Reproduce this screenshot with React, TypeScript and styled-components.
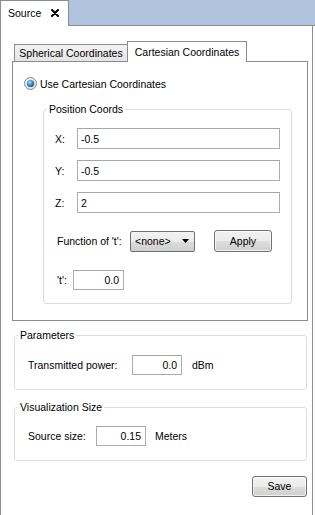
import React from 'react'
import styled, { createGlobalStyle } from 'styled-components'

const GlobalStyle = createGlobalStyle`
  html, body {
    margin: 0;
    padding: 0;
    background: #fff;
  }
  body {
    font-family: "Liberation Sans", Arial, sans-serif;
    font-size: 10.5px;
    color: #000;
  }
  #root {
    width: 315px;
    height: 515px;
    overflow: hidden;
  }
`

const Window = styled.div`
  display: flex;
  flex-direction: column;
  width: 315px;
  height: 515px;
`

const DockBar = styled.div`
  display: flex;
  height: 26px;
  box-sizing: border-box;
  background: #b0c4de;
  border-bottom: 1px solid #898c95;
`

const DockTab = styled.div`
  display: flex;
  align-items: center;
  gap: 10px;
  width: 69px;
  height: 26px;
  margin-bottom: -1px;
  box-sizing: border-box;
  padding: 0 0 1px 7px;
  background: #fff;
  border: 1px solid #898c95;
  border-bottom: none;
`

const Panel = styled.div`
  flex: 1;
  display: flex;
  flex-direction: column;
  width: 313px;
  box-sizing: border-box;
  padding: 15px 4px 0 11px;
  border-left: 1px solid #898c95;
  border-right: 1px solid #898c95;
`

const TabWidget = styled.div`
  display: flex;
  flex-direction: column;
`

const TabBar = styled.div`
  display: flex;
  align-items: flex-end;
  height: 20px;
  padding-left: 2px;
`

const Tab = styled.div<{ $active?: boolean; $width: number }>`
  position: relative;
  z-index: ${(p) => (p.$active ? 1 : 0)};
  display: flex;
  align-items: center;
  justify-content: center;
  width: ${(p) => p.$width}px;
  height: ${(p) => (p.$active ? 21 : 17)}px;
  margin-left: ${(p) => (p.$active ? -1 : 0)}px;
  margin-bottom: ${(p) => (p.$active ? -1 : 0)}px;
  box-sizing: border-box;
  padding-bottom: 1px;
  border: 1px solid #898c95;
  border-bottom: none;
  background: ${(p) =>
    p.$active ? '#fff' : 'linear-gradient(#f3f3f3, #e4e4e4)'};
  white-space: nowrap;
`

const TabPane = styled.div`
  display: flex;
  flex-direction: column;
  padding: 15px 14px 16px 11px;
  border: 1px solid #898c95;
  background: #fff;
`

const RadioRow = styled.label`
  display: flex;
  align-items: center;
  gap: 3px;
  height: 13px;
  white-space: nowrap;
`

const GroupBox = styled.fieldset<{ $indent?: number; $top?: number }>`
  margin: ${(p) => p.$top ?? 0}px 1px 0 ${(p) => p.$indent ?? 0}px;
  padding: 0;
  min-width: 0;
  border: 1px solid #d5dfe5;
  border-radius: 3px;
`

const GroupTitle = styled.legend`
  margin-left: 3px;
  padding: 0 2px;
  line-height: 13px;
  white-space: nowrap;
`

const GroupBody = styled.div<{ $pad: string; $gap?: number }>`
  display: flex;
  flex-direction: column;
  gap: ${(p) => p.$gap ?? 0}px;
  padding: ${(p) => p.$pad};
`

const FieldRow = styled.div<{ $shift?: number; $top?: number }>`
  display: flex;
  align-items: center;
  margin-left: ${(p) => p.$shift ?? 0}px;
  margin-top: ${(p) => p.$top ?? 0}px;
`

const FieldLabel = styled.span<{ $width: number }>`
  flex: none;
  width: ${(p) => p.$width}px;
  white-space: nowrap;
`

const LineEdit = styled.div<{ $width?: number; $height?: number; $right?: boolean }>`
  display: flex;
  align-items: center;
  justify-content: ${(p) => (p.$right ? 'flex-end' : 'flex-start')};
  flex: ${(p) => (p.$width ? 'none' : '1')};
  width: ${(p) => (p.$width ? `${p.$width}px` : 'auto')};
  height: ${(p) => p.$height ?? 20}px;
  box-sizing: border-box;
  padding: 0 4px 0 3px;
  border: 1px solid #abadb3;
  border-top-color: #a3a6ad;
  background: #fff;
`

const Unit = styled.span<{ $gap: number }>`
  margin-left: ${(p) => p.$gap}px;
`

const ComboBox = styled.div`
  display: flex;
  align-items: center;
  justify-content: space-between;
  width: 65px;
  height: 21px;
  box-sizing: border-box;
  padding: 0 5px 0 4px;
  border: 1px solid #707070;
  border-radius: 2px;
  background: linear-gradient(#f2f2f2 0%, #ebebeb 50%, #dddddd 51%, #cfcfcf 100%);
`

const PushButton = styled.button<{ $width: number; $height: number; $left?: number }>`
  width: ${(p) => p.$width}px;
  height: ${(p) => p.$height}px;
  margin: 0 0 0 ${(p) => p.$left ?? 0}px;
  padding: 0 0 1px;
  box-sizing: border-box;
  font: inherit;
  color: #000;
  border: 1px solid #707070;
  border-radius: 3px;
  background: linear-gradient(#f2f2f2 0%, #ebebeb 50%, #dddddd 51%, #cfcfcf 100%);
  box-shadow: inset 0 0 0 1px rgba(255, 255, 255, 0.7);
`

const Footer = styled.div`
  display: flex;
  justify-content: flex-end;
  margin: 15px 1px 0 0;
`

const CloseIcon = () => (
  <svg width="8" height="8" viewBox="0 0 8 8">
    <path d="M1 1 L7 7 M7 1 L1 7" stroke="#000" strokeWidth="2" strokeLinecap="round" />
  </svg>
)

const RadioMark = () => (
  <svg width="13" height="13" viewBox="0 0 13 13">
    <defs>
      <linearGradient id="ring" x1="0" y1="0" x2="1" y2="1">
        <stop offset="0" stopColor="#f6f6f6" />
        <stop offset="1" stopColor="#d6d6d6" />
      </linearGradient>
      <radialGradient id="dot" cx="0.4" cy="0.35" r="0.7">
        <stop offset="0" stopColor="#b8e4fb" />
        <stop offset="0.5" stopColor="#3d8fcf" />
        <stop offset="1" stopColor="#12477a" />
      </radialGradient>
    </defs>
    <circle cx="6.5" cy="6.5" r="6" fill="url(#ring)" stroke="#8a8c90" />
    <circle cx="6.5" cy="6.5" r="3.6" fill="url(#dot)" />
  </svg>
)

const DownArrow = () => (
  <svg width="7" height="4" viewBox="0 0 7 4">
    <path d="M0 0 H7 L3.5 4 Z" fill="#000" />
  </svg>
)

const coords = [
  { axis: 'X:', value: '-0.5' },
  { axis: 'Y:', value: '-0.5' },
  { axis: 'Z:', value: '2' },
]

export default function App() {
  return (
    <Window>
      <GlobalStyle />
      <DockBar>
        <DockTab>
          <span>Source</span>
          <CloseIcon />
        </DockTab>
      </DockBar>
      <Panel>
        <TabWidget>
          <TabBar>
            <Tab $width={114}>Spherical Coordinates</Tab>
            <Tab $width={120} $active>
              Cartesian Coordinates
            </Tab>
          </TabBar>
          <TabPane>
            <RadioRow>
              <RadioMark />
              Use Cartesian Coordinates
            </RadioRow>
            <GroupBox $indent={19} $top={13}>
              <GroupTitle>Position Coords</GroupTitle>
              <GroupBody $pad="12px 11px 13px 11px" $gap={11}>
                {coords.map((c) => (
                  <FieldRow key={c.axis}>
                    <FieldLabel $width={22}>{c.axis}</FieldLabel>
                    <LineEdit $height={21}>{c.value}</LineEdit>
                  </FieldRow>
                ))}
                <FieldRow $shift={2} $top={6}>
                  <FieldLabel $width={73}>Function of 't':</FieldLabel>
                  <ComboBox>
                    <span>&lt;none&gt;</span>
                    <DownArrow />
                  </ComboBox>
                  <PushButton $width={58} $height={22} $left={19}>
                    Apply
                  </PushButton>
                </FieldRow>
                <FieldRow $shift={2} $top={7}>
                  <FieldLabel $width={16}>'t':</FieldLabel>
                  <LineEdit $width={51} $right>
                    0.0
                  </LineEdit>
                </FieldRow>
              </GroupBody>
            </GroupBox>
          </TabPane>
        </TabWidget>

        <GroupBox $indent={2} $top={8}>
          <GroupTitle>Parameters</GroupTitle>
          <GroupBody $pad="13px 11px 14px 13px">
            <FieldRow>
              <FieldLabel $width={104}>Transmitted power:</FieldLabel>
              <LineEdit $width={50} $right>
                0.0
              </LineEdit>
              <Unit $gap={10}>dBm</Unit>
            </FieldRow>
          </GroupBody>
        </GroupBox>

        <GroupBox $indent={2} $top={11}>
          <GroupTitle>Visualization Size</GroupTitle>
          <GroupBody $pad="12px 11px 14px 13px">
            <FieldRow>
              <FieldLabel $width={68}>Source size:</FieldLabel>
              <LineEdit $width={50} $right>
                0.15
              </LineEdit>
              <Unit $gap={9}>Meters</Unit>
            </FieldRow>
          </GroupBody>
        </GroupBox>

        <Footer>
          <PushButton $width={55} $height={21}>
            Save
          </PushButton>
        </Footer>
      </Panel>
    </Window>
  )
}
